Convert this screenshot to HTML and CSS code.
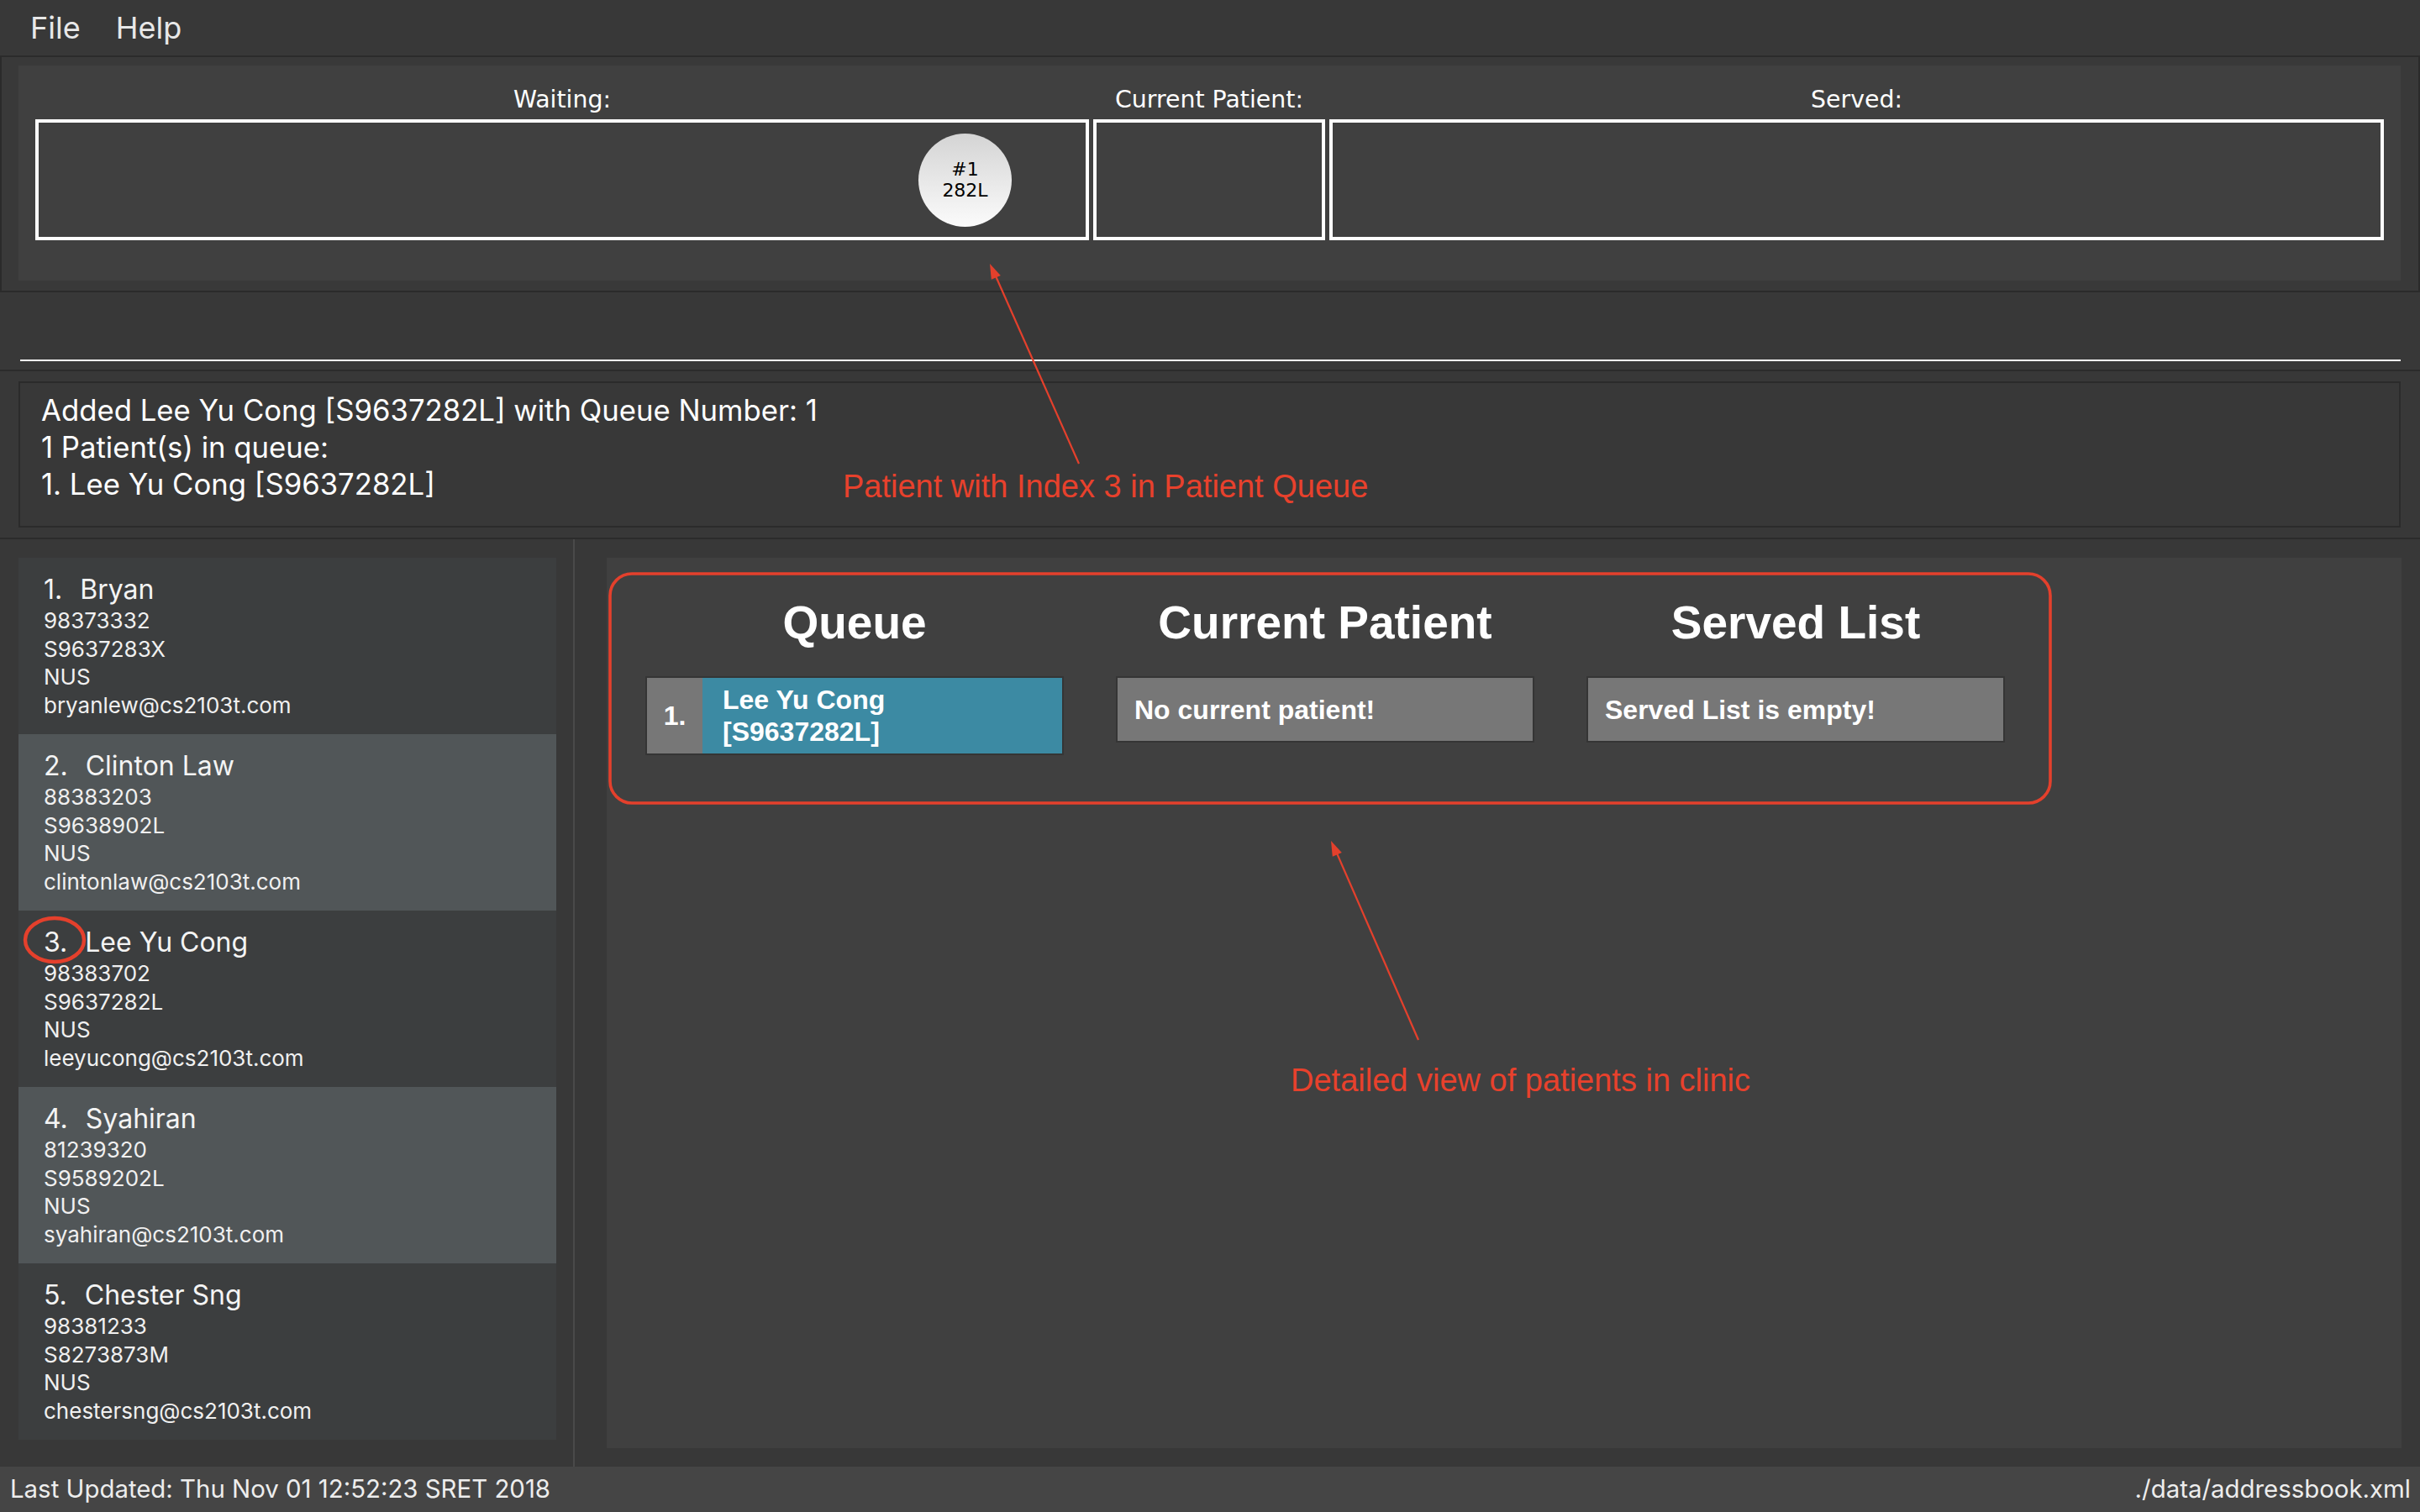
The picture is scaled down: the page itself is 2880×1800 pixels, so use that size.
FILE: index.html
```html
<!DOCTYPE html>
<html lang="en">
<head>
<meta charset="utf-8">
<title>Patient Queue</title>
<link rel="stylesheet" href="styles.css">
</head>
<body>
<div class="app">
  <div class="menubar">
    <span class="menu-item">File</span>
    <span class="menu-item">Help</span>
  </div>

  <div class="queue-pane">
    <div class="queue-inner">
      <div class="qcol">
        <div class="qlabel">Waiting:</div>
        <div class="qbox qbox-waiting">
          <div class="badge"><span>#1</span><span>282L</span></div>
        </div>
      </div>
      <div class="qcol">
        <div class="qlabel">Current Patient:</div>
        <div class="qbox"></div>
      </div>
      <div class="qcol">
        <div class="qlabel">Served:</div>
        <div class="qbox"></div>
      </div>
    </div>
  </div>

  <div class="command-pane">
    <div class="command-field"></div>
  </div>

  <div class="result-pane">
    <div class="result-box">
      <div>Added Lee Yu Cong [S9637282L] with Queue Number: 1</div>
      <div>1 Patient(s) in queue:</div>
      <div>1. Lee Yu Cong [S9637282L]</div>
    </div>
  </div>

  <div class="split">
    <div class="list-pane">
      <div class="card card-odd">
        <div class="card-name"><span>1.</span><span>Bryan</span></div>
        <div class="card-detail">98373332</div>
        <div class="card-detail">S9637283X</div>
        <div class="card-detail">NUS</div>
        <div class="card-detail">bryanlew@cs2103t.com</div>
      </div>
      <div class="card card-even">
        <div class="card-name"><span>2.</span><span>Clinton Law</span></div>
        <div class="card-detail">88383203</div>
        <div class="card-detail">S9638902L</div>
        <div class="card-detail">NUS</div>
        <div class="card-detail">clintonlaw@cs2103t.com</div>
      </div>
      <div class="card card-odd">
        <div class="card-name"><span>3.</span><span>Lee Yu Cong</span></div>
        <div class="card-detail">98383702</div>
        <div class="card-detail">S9637282L</div>
        <div class="card-detail">NUS</div>
        <div class="card-detail">leeyucong@cs2103t.com</div>
      </div>
      <div class="card card-even">
        <div class="card-name"><span>4.</span><span>Syahiran</span></div>
        <div class="card-detail">81239320</div>
        <div class="card-detail">S9589202L</div>
        <div class="card-detail">NUS</div>
        <div class="card-detail">syahiran@cs2103t.com</div>
      </div>
      <div class="card card-odd">
        <div class="card-name"><span>5.</span><span>Chester Sng</span></div>
        <div class="card-detail">98381233</div>
        <div class="card-detail">S8273873M</div>
        <div class="card-detail">NUS</div>
        <div class="card-detail">chestersng@cs2103t.com</div>
      </div>
    </div>
    <div class="divider"></div>
    <div class="detail-pane">
      <div class="detail">
        <div class="detail-grid">
          <div class="dheading">Queue</div>
          <div class="dheading">Current Patient</div>
          <div class="dheading">Served List</div>
          <div class="qcard">
            <div class="qnum">1.</div>
            <div class="qname">Lee Yu Cong<br>[S9637282L]</div>
          </div>
          <div class="qcard qempty">No current patient!</div>
          <div class="qcard qempty">Served List is empty!</div>
        </div>
      </div>
    </div>
  </div>

  <div class="statusbar">
    <span>Last Updated: Thu Nov 01 12:52:23 SRET 2018</span>
    <span>./data/addressbook.xml</span>
  </div>

  <svg class="annot" width="1440" height="900" viewBox="0 0 1440 900" aria-hidden="true">
    <rect x="363" y="341.5" width="857" height="136.5" rx="13" ry="13" fill="none" stroke="#e4402c" stroke-width="1.8"/>
    <line x1="642" y1="276" x2="591" y2="161" stroke="#e4402c" stroke-width="1.1"/>
    <polygon points="589,157 595.4,164.0 589.9,166.4" fill="#e4402c"/>
    <line x1="844" y1="619" x2="794" y2="504.5" stroke="#e4402c" stroke-width="1.1"/>
    <polygon points="792,500.5 798.4,507.5 792.9,509.9" fill="#e4402c"/>
    <ellipse cx="32.5" cy="559.5" rx="17.5" ry="13" fill="none" stroke="#e4402c" stroke-width="2.2"/>
  </svg>
  <div class="note note-queue">Patient with Index 3 in Patient Queue</div>
  <div class="note note-detail">Detailed view of patients in clinic</div>
</div>
</body>
</html>
```

FILE: styles.css
```css
* {
  box-sizing: border-box;
}

html,
body {
  margin: 0;
  padding: 0;
  background: #383838;
}

.app {
  zoom: 2;
  width: 1440px;
  height: 900px;
  position: relative;
  overflow: hidden;
  background: #383838;
  font-family: Inter, "Liberation Sans", sans-serif;
  color: #ffffff;
  display: flex;
  flex-direction: column;
}

/* Menu bar */
.menubar {
  flex: none;
  height: 33px;
  display: flex;
  gap: 21px;
  padding-left: 18px;
  font-size: 18px;
  line-height: 33px;
  color: #e8e8e8;
  background: #383838;
}

/* Queue overview */
.queue-pane {
  flex: none;
  height: 141px;
  border: 1px solid #2b2b2b;
  background: #393939;
  padding: 5px 10.5px 0 10px;
}

.queue-inner {
  height: 128px;
  background: #404040;
  display: grid;
  grid-template-columns: 627px 138px 627.5px;
  column-gap: 2.5px;
  padding-left: 10px;
}

.qcol {
  display: flex;
  flex-direction: column;
}

.qlabel {
  height: 32px;
  padding-top: 9px;
  line-height: 23px;
  text-align: center;
  font-family: "DejaVu Sans", Verdana, sans-serif;
  font-size: 14.2px;
  color: #ffffff;
}

.qbox {
  height: 72px;
  border: 2px solid #ffffff;
  display: flex;
  align-items: center;
  justify-content: flex-end;
  padding-right: 44px;
}

.badge {
  width: 55.5px;
  height: 55.5px;
  border-radius: 50%;
  background: linear-gradient(#d4d4d4, #fbfbfb);
  display: flex;
  flex-direction: column;
  align-items: center;
  justify-content: center;
  font-family: "DejaVu Sans", Verdana, sans-serif;
  font-size: 11px;
  line-height: 12.5px;
  color: #000000;
}

/* Command box */
.command-pane {
  flex: none;
  height: 47px;
  border-bottom: 1px solid #2b2b2b;
  padding: 0 11.5px 0 12px;
}

.command-field {
  height: 41px;
  border-bottom: 1px solid #ffffff;
}

/* Result display */
.result-pane {
  flex: none;
  height: 100px;
  border-bottom: 1px solid #2b2b2b;
  padding: 6px 11.5px 0 11px;
}

.result-box {
  height: 87px;
  border: 1px solid #2b2b2b;
  background: #383838;
  padding: 5px 12.5px;
  font-size: 17.35px;
  line-height: 22px;
  color: #ffffff;
}

/* Split area */
.split {
  flex: 1;
  display: flex;
  min-height: 0;
}

.list-pane {
  width: 341px;
  flex: none;
  padding: 11px 10px 0 11px;
}

.card {
  height: 105px;
  padding: 9px 0 0 15px;
}

.card-odd {
  background: #3c3e3f;
}

.card-even {
  background: #515658;
}

.card-name {
  display: flex;
  gap: 10.5px;
  font-size: 16px;
  line-height: 20px;
  color: #f4f4f4;
}

.card-detail {
  font-size: 13px;
  line-height: 16.8px;
  color: #f0f0f0;
}

.divider {
  width: 1px;
  flex: none;
  background: #4a4a4a;
}

.detail-pane {
  flex: 1;
  padding: 11px 11px 11px 19px;
}

.detail {
  height: 100%;
  background: #404040;
  padding: 22.5px 0 0 23px;
}

.detail-grid {
  display: grid;
  grid-template-columns: repeat(3, 249px);
  column-gap: 31px;
  row-gap: 16px;
  align-items: start;
}

.dheading {
  height: 32px;
  line-height: 32px;
  text-align: center;
  font-family: "Liberation Sans", Arial, sans-serif;
  font-weight: bold;
  font-size: 27.5px;
  color: #ffffff;
}

.qcard {
  border: 1px solid #353535;
  display: flex;
  font-family: "Liberation Sans", Arial, sans-serif;
  font-weight: bold;
  font-size: 16px;
  line-height: 19px;
  color: #ffffff;
}

.qnum {
  width: 33px;
  flex: none;
  background: #777777;
  display: flex;
  align-items: center;
  justify-content: center;
}

.qname {
  flex: 1;
  background: #3c8aa3;
  padding: 3.5px 12px;
}

.qempty {
  background: #777777;
  padding: 9.25px 10px;
}

/* Status bar */
.statusbar {
  flex: none;
  height: 27px;
  background: #454545;
  display: flex;
  justify-content: space-between;
  padding: 0 5.5px 0 6px;
  font-size: 14.7px;
  line-height: 27px;
  color: #ededed;
}

/* Annotations overlay */
.annot {
  position: absolute;
  left: 0;
  top: 0;
  pointer-events: none;
}

.note {
  position: absolute;
  font-family: "Liberation Sans", Arial, sans-serif;
  font-size: 19px;
  line-height: 22px;
  color: #e8412c;
  white-space: nowrap;
}

.note-queue {
  left: 501.5px;
  top: 278.5px;
}

.note-detail {
  left: 768px;
  top: 632px;
}
```
